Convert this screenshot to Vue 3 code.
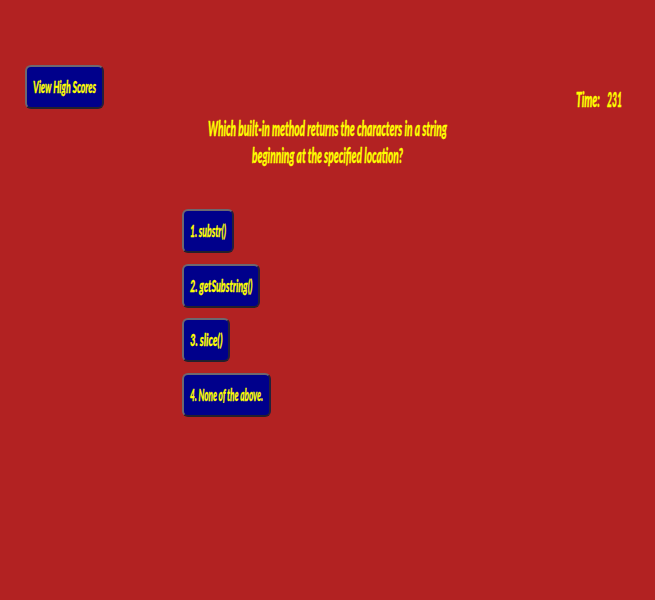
<script setup>
import { h } from 'vue'

const question = [
  { text: 'Which built-in method returns the characters in a string', width: 239 },
  { text: 'beginning at the specified location?', width: 151 },
]

const answers = [
  { text: '1. substr()', width: 36 },
  { text: '2. getSubstring()', width: 62.5 },
  { text: '3. slice()', width: 32.5 },
  { text: '4. None of the above.', width: 73 },
]

// Condensed lettering: real text fitted to a fixed line width.
const Lettering = ({ text, width, size, height }) =>
  h('svg', { width: width + 1, height, overflow: 'visible', style: { display: 'block' } }, [
    h('text', {
      x: 0,
      y: height * 0.75,
      'font-size': size,
      textLength: width,
      lengthAdjust: 'spacingAndGlyphs',
    }, text),
  ])
Lettering.props = ['text', 'width', 'size', 'height']
</script>

<template>
  <div class="page">
    <header class="bar">
      <button class="btn">
        <Lettering text="View High Scores" :width="63" :size="17" :height="20" />
      </button>
      <div class="timer">
        <Lettering text="Time:" :width="24" :size="20" :height="20" />
        <Lettering text="231" :width="15" :size="20" :height="20" />
      </div>
    </header>
    <main>
      <h1 class="question">
        <Lettering v-for="line in question" :key="line.text" v-bind="line" :size="20.5" :height="27" />
      </h1>
      <div class="answers">
        <button v-for="a in answers" :key="a.text" class="btn">
          <Lettering v-bind="a" :size="17" :height="20" />
        </button>
      </div>
    </main>
  </div>
</template>

<style>
body {
  margin: 0;
  background: #b22222;
}
</style>

<style scoped>
.page {
  box-sizing: border-box;
  height: 600px;
  padding-top: 65px;
  background: #b22222;
  color: #ffff00;
  font-family: Lato, "Liberation Sans", sans-serif;
  font-style: italic;
  font-weight: 900;
  fill: #ffff00;
  stroke: #ffff00;
  stroke-width: 0.3px;
}
.bar {
  display: flex;
  justify-content: space-between;
  align-items: flex-start;
  height: 51px;
  padding: 0 32px 0 25px;
}
.btn {
  box-sizing: border-box;
  display: flex;
  align-items: center;
  height: 44px;
  margin: 0;
  padding: 2px 5px 0 6px;
  border: 2px solid;
  border-color: #6c6870 #252039 #24202c #6c6870;
  border-radius: 6px;
  background: #00008b;
  color: #ffff00;
  font: inherit;
}
.timer {
  display: flex;
  gap: 6px;
  padding-top: 26.5px;
}
.question {
  display: flex;
  flex-direction: column;
  align-items: center;
  margin: 0;
  font: inherit;
}
.answers {
  display: flex;
  flex-direction: column;
  align-items: flex-start;
  gap: 10.6px;
  padding: 39px 0 0 181.5px;
}
</style>
